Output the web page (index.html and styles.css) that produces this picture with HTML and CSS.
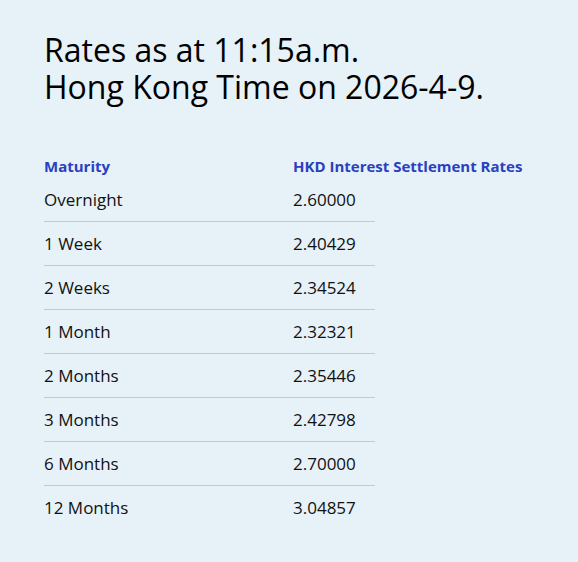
FILE: index.html
```html
<!DOCTYPE html>
<html lang="en">
<head>
    <meta charset="UTF-8">
    <title>HKD Interest Settlement Rates</title>
    <link rel="stylesheet" href="styles.css">
</head>
<body>
    <div class="pagina">
        <h1 class="titulo">Rates as at 11:15a.m.<br>Hong Kong Time on 2026-4-9.</h1>
        <div class="tabela">
            <div class="linha cabecalho">
                <span class="col-prazo">Maturity</span>
                <span class="col-taxa">HKD Interest Settlement Rates</span>
            </div>
            <div class="linha"><span class="col-prazo">Overnight</span><span class="col-taxa">2.60000</span></div>
            <div class="linha"><span class="col-prazo">1 Week</span><span class="col-taxa">2.40429</span></div>
            <div class="linha"><span class="col-prazo">2 Weeks</span><span class="col-taxa">2.34524</span></div>
            <div class="linha"><span class="col-prazo">1 Month</span><span class="col-taxa">2.32321</span></div>
            <div class="linha"><span class="col-prazo">2 Months</span><span class="col-taxa">2.35446</span></div>
            <div class="linha"><span class="col-prazo">3 Months</span><span class="col-taxa">2.42798</span></div>
            <div class="linha"><span class="col-prazo">6 Months</span><span class="col-taxa">2.70000</span></div>
            <div class="linha ultima"><span class="col-prazo">12 Months</span><span class="col-taxa">3.04857</span></div>
        </div>
    </div>
</body>
</html>
```

FILE: styles.css
```css
body {
    margin: 0;
    background-color: #e6f1f8;
    font-family: 'Open Sans', 'Noto Sans', sans-serif;
    color: #111;
}
.pagina {
    padding: 31px 44px 20px 44px;
}
.titulo {
    margin: 0 0 49px 0;
    font-size: 32px;
    font-weight: normal;
    line-height: 37px;
    color: #000;
}
.tabela {
    width: 331px;
}
.linha {
    display: flex;
    align-items: center;
    height: 43px;
    border-bottom: 1px solid #b3cde3;
    font-size: 17px;
}
.linha.cabecalho {
    height: 24px;
    border-bottom: none;
    white-space: nowrap;
    font-size: 15px;
    font-weight: bold;
    color: #2a40c0;
}
.linha.ultima {
    border-bottom: none;
}
.col-prazo {
    width: 249px;
    flex-shrink: 0;
}
.col-taxa {
    flex-shrink: 0;
}
```
